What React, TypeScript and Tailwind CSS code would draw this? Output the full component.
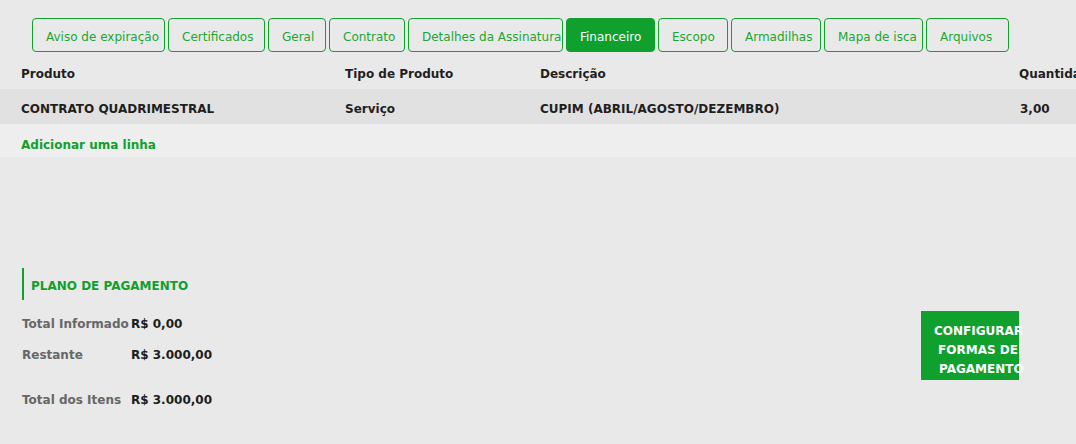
const tabs = [
  { label: "Aviso de expiração", w: "w-[133px]" },
  { label: "Certificados", w: "w-[97px]" },
  { label: "Geral", w: "w-[58px]" },
  { label: "Contrato", w: "w-[76px]" },
  { label: "Detalhes da Assinatura", w: "w-[155px]" },
  { label: "Financeiro", w: "w-[89px]", active: true },
  { label: "Escopo", w: "w-[70px]" },
  { label: "Armadilhas", w: "w-[90px]" },
  { label: "Mapa de isca", w: "w-[99px]" },
  { label: "Arquivos", w: "w-[83px]" },
];

const totals = [
  { label: "Total Informado", value: "R$ 0,00", cls: "mt-[15px]" },
  { label: "Restante", value: "R$ 3.000,00", cls: "mt-[13px]" },
  { label: "Total dos Itens", value: "R$ 3.000,00", cls: "mt-[27px]" },
];

export default function App() {
  return (
    <div
      className="h-[444px] w-[1076px] overflow-hidden bg-[#e9e9e9] text-[12px] text-[#1f1f1f]"
      style={{ fontFamily: '"DejaVu Sans", Verdana, sans-serif' }}
    >
      {/* tabs */}
      <div className="flex gap-[3px] pl-[32px] pt-[18px]">
        {tabs.map((t) => (
          <div
            key={t.label}
            className={
              "flex h-[34px] shrink-0 items-center overflow-hidden whitespace-nowrap rounded-[4px] border pl-[13px] pt-[4px] " +
              t.w +
              (t.active
                ? " border-[#0fa02d] bg-[#0fa02d] text-white"
                : " border-[#12a02f] text-[#1ea535]")
            }
          >
            {t.label}
          </div>
        ))}
      </div>

      {/* table */}
      <div className="w-[1200px]">
        <div className="flex h-[37px] items-center pt-[7px] font-bold">
          <div className="w-[345px] pl-[21px]">Produto</div>
          <div className="w-[195px]">Tipo de Produto</div>
          <div className="w-[479px]">Descrição</div>
          <div>Quantidade</div>
        </div>
        <div className="flex h-[35px] items-center bg-[#e1e1e1] pt-[4px] font-bold">
          <div className="w-[345px] pl-[21px]">CONTRATO QUADRIMESTRAL</div>
          <div className="w-[195px]">Serviço</div>
          <div className="w-[480px]">CUPIM (ABRIL/AGOSTO/DEZEMBRO)</div>
          <div>3,00</div>
        </div>
        <div className="flex h-[33px] items-center bg-[#eeeeee] pl-[21px] pt-[9px] font-bold text-[#0fa02d]">
          Adicionar uma linha
        </div>
      </div>

      {/* payment plan */}
      <div className="flex pl-[22px] pt-[111px]">
        <div className="flex-1">
          <div className="flex h-[32px] items-center border-l-2 border-[#0fa02d] pl-[7px] pt-[3px] font-bold text-[#0fa02d]">
            PLANO DE PAGAMENTO
          </div>
          {totals.map((r) => (
            <div key={r.label} className={"flex font-bold " + r.cls}>
              <div className="w-[109px] text-[#676767]">{r.label}</div>
              <div className="text-[#1c1c1c]">{r.value}</div>
            </div>
          ))}
        </div>
        <div className="mr-[57px] mt-[43px] h-[69px] w-[98px] bg-[#0fa02d] pl-[13px] pt-[11px] font-bold leading-[19px] text-white">
          <div className="w-[88px] text-center">
            <div>CONFIGURAR</div>
            <div>FORMAS DE</div>
            <div className="pl-[5px]">PAGAMENTO</div>
          </div>
        </div>
      </div>
    </div>
  );
}
